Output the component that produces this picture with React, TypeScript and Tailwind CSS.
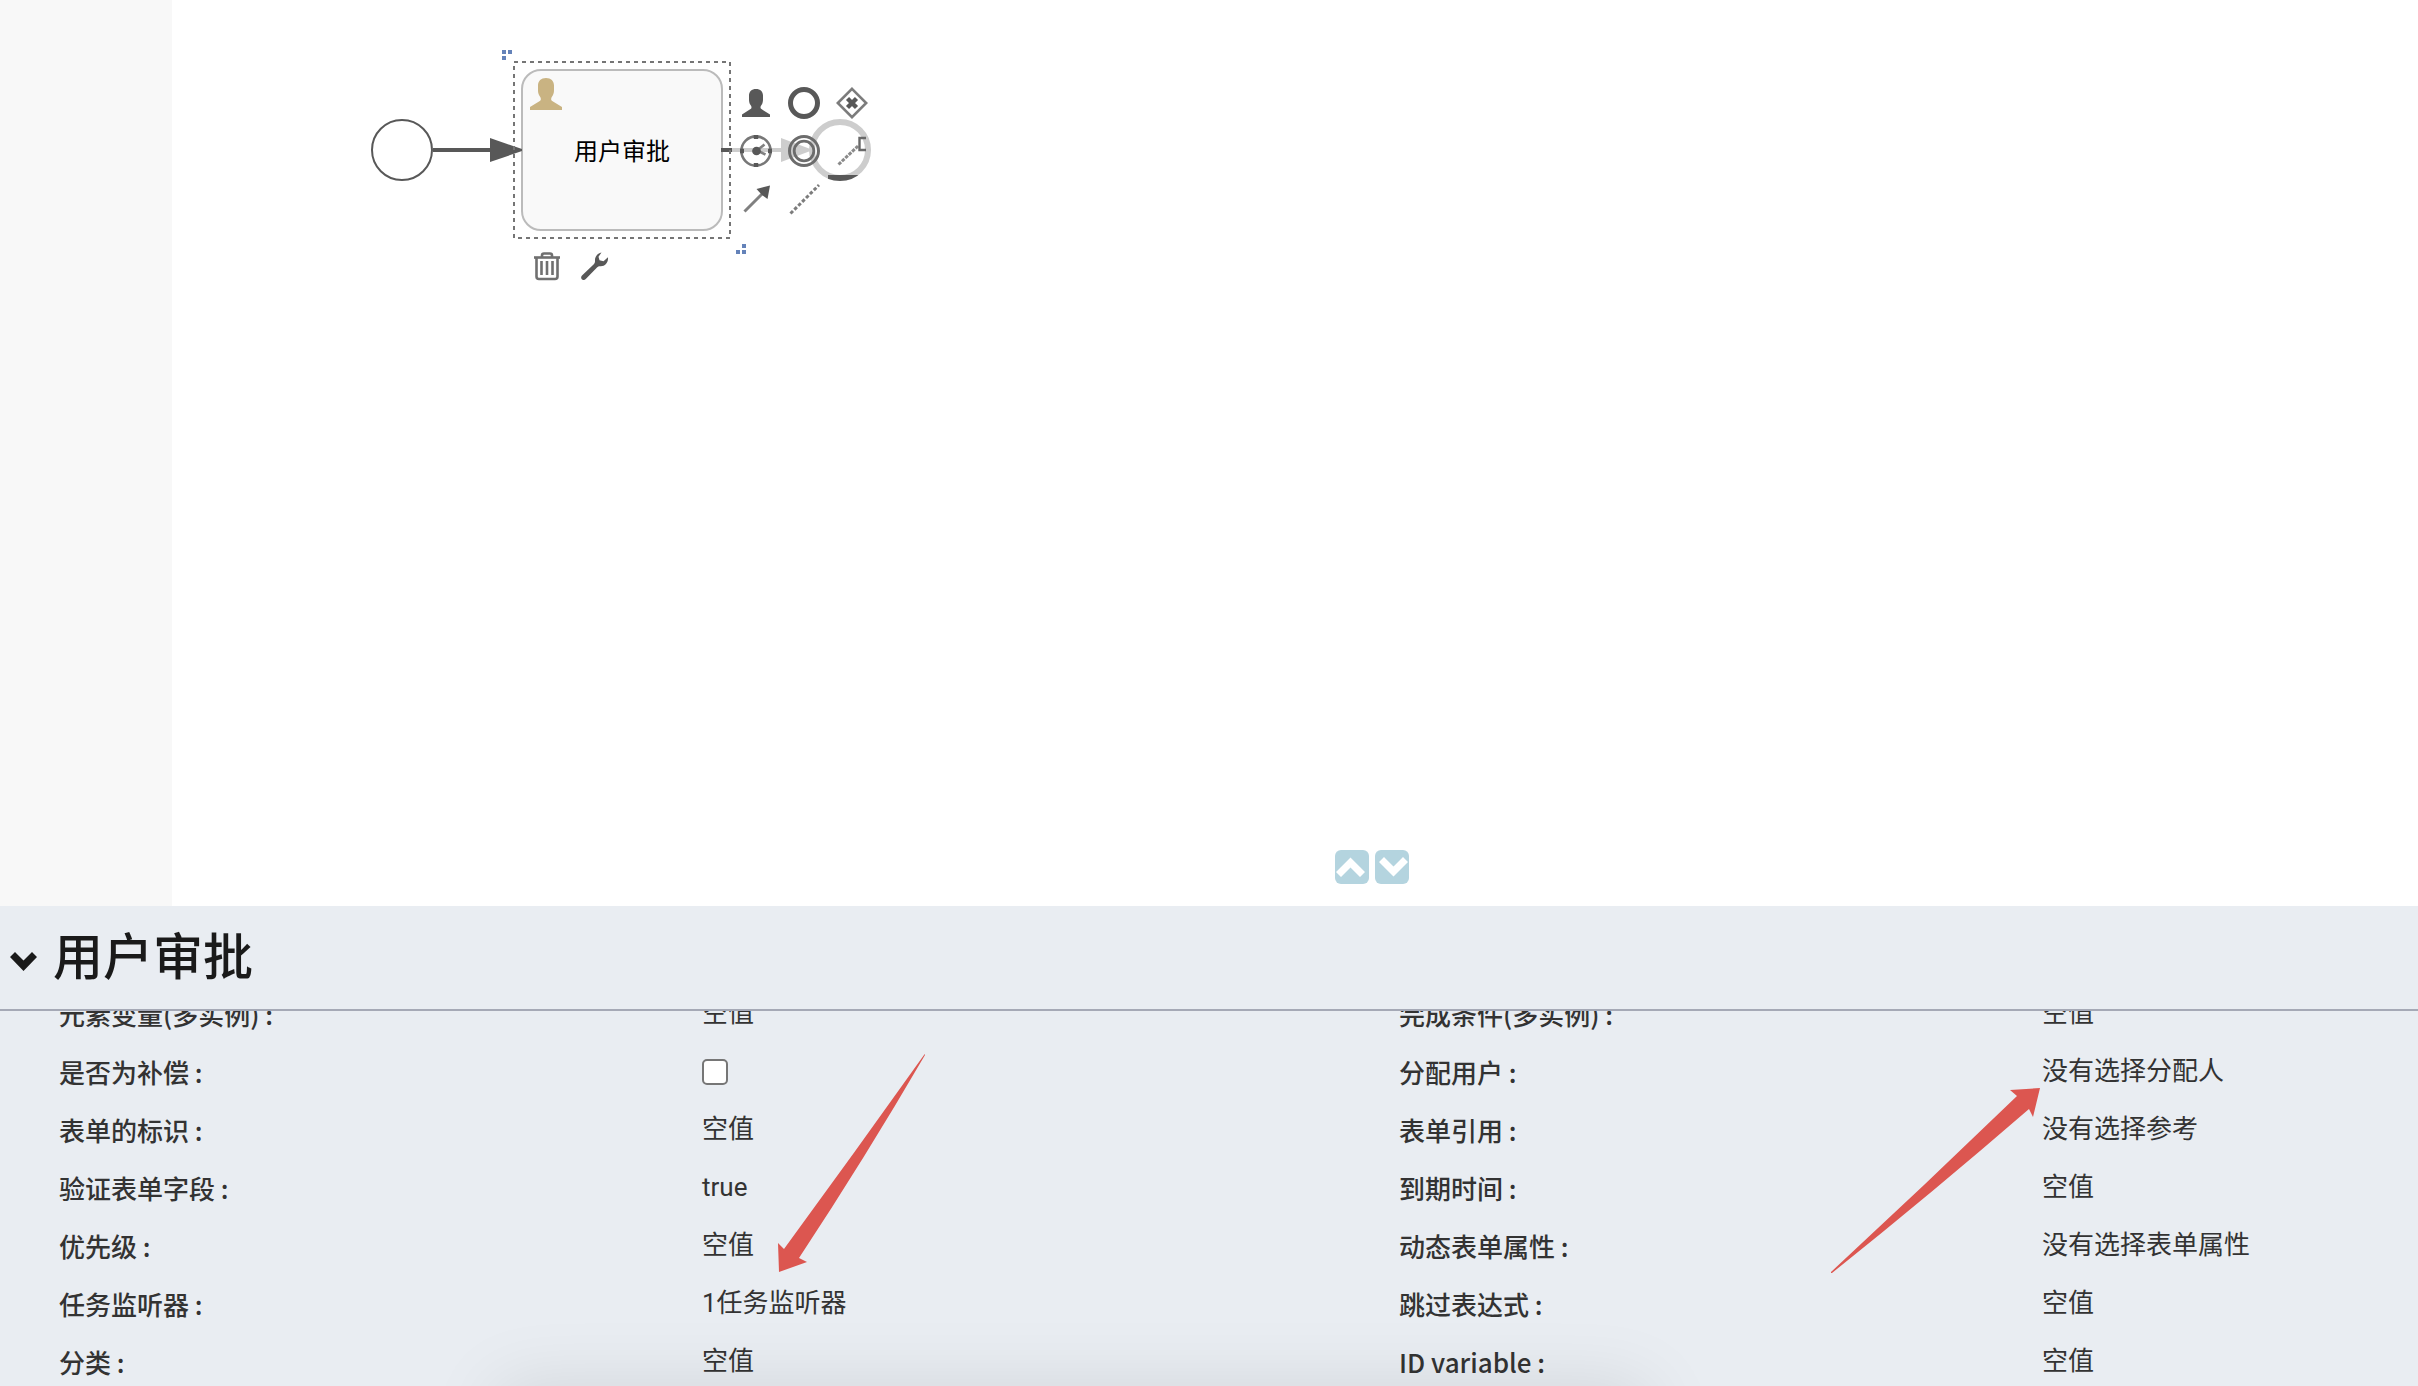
import type { ReactNode } from 'react';

type Row = { label: string; value: string | null };

const leftRows: Row[] = [
  { label: '元素变量(多实例) :', value: '空值' },
  { label: '是否为补偿 :', value: null },
  { label: '表单的标识 :', value: '空值' },
  { label: '验证表单字段 :', value: 'true' },
  { label: '优先级 :', value: '空值' },
  { label: '任务监听器 :', value: '1任务监听器' },
  { label: '分类 :', value: '空值' },
];

const rightRows: Row[] = [
  { label: '完成条件(多实例) :', value: '空值' },
  { label: '分配用户 :', value: '没有选择分配人' },
  { label: '表单引用 :', value: '没有选择参考' },
  { label: '到期时间 :', value: '空值' },
  { label: '动态表单属性 :', value: '没有选择表单属性' },
  { label: '跳过表达式 :', value: '空值' },
  { label: 'ID variable :', value: '空值' },
];

const INK = '#585858';

function Glyph({ children }: { children: ReactNode }) {
  return (
    <svg viewBox="0 0 32 32" className="size-8" aria-hidden="true">
      {children}
    </svg>
  );
}

function UserShape({ color }: { color: string }) {
  return (
    <path
      fill={color}
      d="M16 0c5 0 8 3 8 7.500v4.500c0 2-.3 3.500-1 5l-1.500 2.500c-.5 1.500-.5 2.500.3 3.200L32 29v3H0v-3l10.200-6.300c.8-.7.8-1.700.3-3.200L9 17c-.7-1.500-1-3-1-5V7.500C8 3 11 0 16 0Z"
    />
  );
}

const quickActions: { name: string; icon: ReactNode }[] = [
  {
    name: '用户任务',
    icon: (
      <svg x="2" y="2" width="28" height="28" viewBox="0 0 32 32">
        <UserShape color={INK} />
      </svg>
    ),
  },
  { name: '结束事件', icon: <circle cx="16" cy="16" r="13.500" fill="none" stroke={INK} strokeWidth="5" /> },
  {
    name: '互斥网关',
    icon: (
      <g fill="none" stroke={INK}>
        <path d="M16 1.800 30.200 16 16 30.200 1.800 16Z" strokeWidth="2.600" stroke="#7c7c7c" />
        <path d="m11.500 11.500 9 9m0-9-9 9" strokeWidth="4.400" />
      </g>
    ),
  },
  {
    name: '定时事件',
    icon: (
      <g fill="none" stroke={INK}>
        <circle cx="16" cy="16" r="14.600" strokeWidth="2.600" stroke="#777" />
        <path d="M16 0v4M16 28v4M0 16h4M28 16h4" strokeWidth="4.500" />
        <path d="M24.500 9.500 17 15.500l8.500 4" strokeWidth="2.600" stroke="#808080" />
        <circle cx="16.500" cy="16" r="3.600" fill={INK} strokeWidth="1.500" />
      </g>
    ),
  },
  {
    name: '中间事件',
    icon: (
      <g fill="none" stroke="#6c6c6c">
        <circle cx="16" cy="16" r="14.500" strokeWidth="3" />
        <circle cx="16" cy="16" r="9.800" strokeWidth="2.800" />
      </g>
    ),
  },
  {
    name: '文本注释',
    icon: (
      <g fill="none">
        <path d="M2.500 29.500 22 11" stroke="#8a8a8a" strokeWidth="3" strokeDasharray="3.500 1.200" />
        <path d="M30 3h-6.500v12H30" stroke="#686868" strokeWidth="2.400" />
      </g>
    ),
  },
  {
    name: '顺序流',
    icon: (
      <g>
        <path d="M4.500 28.500 22 11" stroke="#808080" strokeWidth="3" />
        <path d="M30 2.500 27.500 16 22 12l-5.500-6Z" fill={INK} />
      </g>
    ),
  },
  {
    name: '关联',
    icon: <path d="M2.500 30.500 31 2" stroke="#7c7c7c" strokeWidth="3" strokeDasharray="3.500 2" />,
  },
];

function BpmnDiagram() {
  return (
    <>
      {/* flow lines and events */}
      <svg width="900" height="300" className="absolute left-0 top-0" aria-hidden="true">
        <circle cx="402" cy="150" r="30" fill="#fff" stroke={INK} strokeWidth="2" />
        <path d="M433 150h60M723 150h60" stroke={INK} strokeWidth="4" />
        <path d="M781 138 813 150 781 162Z" fill={INK} />
        <circle cx="840" cy="150" r="28" fill="none" stroke={INK} strokeWidth="6" />
      </svg>

      <div className="absolute left-[521px] top-[69px] flex h-[162px] w-[202px] items-center justify-center rounded-[20px] border-2 border-[#bbbbbb] bg-[#f9f9f9]">
        <svg viewBox="0 0 32 32" className="absolute left-[7px] top-[7px] size-8" aria-hidden="true">
          <UserShape color="#c9b382" />
        </svg>
        <span className="pt-1 text-2xl leading-8 text-black">用户审批</span>
      </div>

      {/* arrow heads and selection frame drawn over the node edge */}
      <svg width="900" height="300" className="pointer-events-none absolute left-0 top-0" aria-hidden="true">
        <path d="M490 138 522 149v2L490 162Z" fill={INK} />
        <path d="M721 150h11" stroke={INK} strokeWidth="4" />
        <rect x="514" y="62" width="216" height="176" fill="none" stroke="#757575" strokeWidth="2" strokeDasharray="4 4" />
        <g fill="#6482b9">
          <path d="M502 50h4v4h-4zM508 50h4v4h-4zM502 56h4v4h-4z" />
          <path d="M742 244h4v4h-4zM736 250h4v4h-4zM742 250h4v4h-4z" />
        </g>
      </svg>

      <div className="absolute left-[732px] top-[79px] grid grid-cols-[repeat(3,48px)]">
        {quickActions.map((a) => (
          <button key={a.name} type="button" aria-label={a.name} className="flex size-12 items-center justify-center bg-white/70">
            <Glyph>{a.icon}</Glyph>
          </button>
        ))}
      </div>

      <div className="absolute left-[523px] top-[242px] flex">
        <button type="button" aria-label="删除" className="flex size-12 items-center justify-center">
          <Glyph>
            <g fill="none" stroke="#707070" strokeWidth="2.600">
              <path d="M3 7.500h26" />
              <path d="M11 7V5.500Q11 3.500 13 3.500h6q2 0 2 2V7" />
              <path d="M5.500 8v18.500q0 2.500 2.500 2.500h16q2.500 0 2.500-2.500V8" />
              <path d="M10.500 11v14M16 11v14M21.500 11v14" />
            </g>
          </Glyph>
        </button>
        <button type="button" aria-label="更改类型" className="flex size-12 items-center justify-center">
          <Glyph>
            <path
              fill={INK}
              d="M22.500 2.500c-4 .8-6.800 4-6.500 8.300.1 1.500-.2 2.500-1.200 3.500L3 25.500c-1.500 1.600-.8 3.200.2 4 1.200.9 2.600.6 3.800-.7l11-11.300c1-1 2-1.300 3.500-1.200 4.500.2 8-3.800 7.500-9l-4.500 4-4-1-1-3.500Z"
            />
          </Glyph>
        </button>
      </div>
    </>
  );
}

function PropertyList({ rows, className }: { rows: Row[]; className: string }) {
  return (
    <dl className={className}>
      {rows.map((r) => (
        <div key={r.label} className="contents">
          <dt className="h-[58px] whitespace-nowrap pt-px font-['Noto_Sans_CJK_SC',sans-serif] font-medium">
            {r.value === null ? <label htmlFor="compensation">{r.label}</label> : r.label}
          </dt>
          <dd className="h-[58px] whitespace-nowrap">
            {r.value === null ? (
              <input
                id="compensation"
                type="checkbox"
                className="mt-2 block size-[26px] appearance-none rounded-[5px] border-2 border-[#767676] bg-white checked:bg-[#3b82f6]"
              />
            ) : (
              r.value
            )}
          </dd>
        </div>
      ))}
    </dl>
  );
}

export default function App() {
  return (
    <div className="relative flex h-screen flex-col overflow-hidden bg-white font-['Roboto','Noto_Sans_CJK_SC',sans-serif] text-[#333333]">
      <main className="relative flex min-h-0 flex-1">
        <aside className="w-[172px] shrink-0 bg-[#f8f8f8]" />
        <div className="min-w-0 flex-1" />
        <BpmnDiagram />
        <div className="absolute bottom-[22px] left-[1335px] flex gap-1.5">
          <button type="button" aria-label="收起" className="size-[34px] rounded-md bg-[#b4d4df]">
            <svg viewBox="0 0 34 34" aria-hidden="true">
              <path d="M15.500 7.500 30 22l-5 5-9.500-9.500L6 27l-5-5Z" fill="#fff" />
            </svg>
          </button>
          <button type="button" aria-label="展开" className="size-[34px] rounded-md bg-[#b4d4df]">
            <svg viewBox="0 0 34 34" aria-hidden="true">
              <path d="M18.500 26.500 4 12l5-5 9.500 9.500L28 7l5 5Z" fill="#fff" />
            </svg>
          </button>
        </div>
      </main>

      <section className="relative shrink-0 overflow-hidden bg-[#e9edf2]">
        <header className="flex h-[105px] items-center gap-4 border-b-2 border-[#a5a9b6] pl-[10px]">
          <button type="button" aria-label="折叠属性" className="mt-2">
            <svg viewBox="0 0 27 19" className="h-[19px] w-[27px]" aria-hidden="true">
              <path d="M5 0 13.500 8.500 22 0l5 5-13.500 14L0 5Z" fill="#1a1a1a" />
            </svg>
          </button>
          <h1 className="text-[50px] font-medium leading-[60px] text-[#1a1a1a]">用户审批</h1>
        </header>

        <div className="h-[375px] overflow-hidden text-[26px] leading-10">
          <div className="-mt-[18px] grid grid-cols-[1340fr_1019fr] pl-[59px]">
            <PropertyList rows={leftRows} className="grid grid-cols-[643fr_697fr] content-start" />
            <PropertyList rows={rightRows} className="grid grid-cols-[643fr_376fr] content-start" />
          </div>
        </div>

        <div className="pointer-events-none absolute left-[498px] top-full h-24 w-[1150px] shadow-[0_0_72px_rgba(0,0,0,0.1)]" />

        {/* annotation arrows */}
        <svg viewBox="0 0 2418 480" width="2418" height="480" className="pointer-events-none absolute left-0 top-0" aria-hidden="true">
          <g fill="#dc5650">
            <path d="M924 149Q855 246 784 343L778 337 779 366 807 356 799 352Q865 252 925 149V148Z" />
            <path d="M1831 366Q1925 279 2017 190L2010 184 2040 182 2033 211 2029 203Q1932 287 1832 367H1831Z" />
          </g>
        </svg>
      </section>
    </div>
  );
}
